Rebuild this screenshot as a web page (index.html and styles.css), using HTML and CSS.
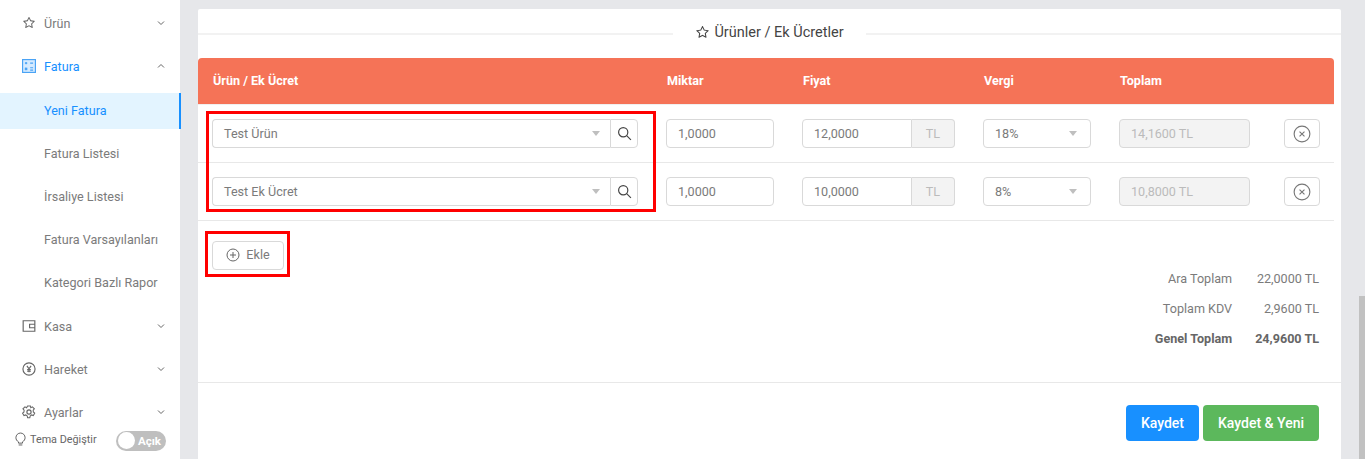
FILE: index.html
```html
<!DOCTYPE html>
<html lang="tr">
  <head>
    <meta charset="UTF-8" />
    <title>Yeni Fatura</title>
    <link rel="stylesheet" href="styles.css">
  </head>
  <body>
    <div class="app">
      <aside class="sidebar">
        <nav class="menu">
          <div class="menu-item">
            <svg class="menu-icon" viewBox="0 0 1024 1024"><path fill="currentColor" d="M908 353.1l-253.9-36.9L540.7 86.1c-3.1-6.3-8.2-11.4-14.5-14.5-15.8-7.8-35-1.3-42.9 14.5L369.8 316.2l-253.9 36.9c-7 1-13.4 4.3-18.3 9.3a32.05 32.05 0 0 0 .6 45.3l183.7 179.1-43.4 252.9a31.95 31.95 0 0 0 46.4 33.7L512 754l227.1 119.4c6.2 3.3 13.4 4.4 20.3 3.2 17.4-3 29.1-19.5 26.1-36.9l-43.4-252.9 183.7-179.1c5-4.9 8.3-11.3 9.3-18.3 2.7-17.5-9.5-33.7-27-36.3zM664.8 561.6l36.1 210.3L512 672.7 323.1 772l36.1-210.3-152.8-149L417.6 382 512 190.7 606.4 382l211.2 30.7-152.8 148.9z"/></svg>
            <span class="menu-label">Ürün</span>
            <svg class="chevron" viewBox="0 0 10 10"><path d="M2 3.5l3 3 3-3"/></svg>
          </div>
          <div class="menu-item is-open">
            <svg class="menu-icon" viewBox="0 0 12 12"><rect x="0.5" y="0.5" width="11" height="11" fill="#d6ebff" stroke="currentColor"/><path d="M2.5 3.5h2M3.5 2.5v2M7 3.500h2.500M2.500 7.500l2 2M4.500 7.500l-2 2M7 7.500h2.500M7 9.500h2.500" stroke="currentColor" fill="none"/></svg>
            <span class="menu-label">Fatura</span>
            <svg class="chevron" viewBox="0 0 10 10"><path d="M2 6.5l3-3 3 3"/></svg>
          </div>
          <div class="submenu">
            <div class="submenu-item is-active">Yeni Fatura</div>
            <div class="submenu-item">Fatura Listesi</div>
            <div class="submenu-item">İrsaliye Listesi</div>
            <div class="submenu-item">Fatura Varsayılanları</div>
            <div class="submenu-item">Kategori Bazlı Rapor</div>
          </div>
          <div class="menu-item">
            <svg class="menu-icon" viewBox="0 0 12 12"><path d="M1 1.5h10v9H1zM11 4.5H6.5v3H11" fill="none" stroke="currentColor"/></svg>
            <span class="menu-label">Kasa</span>
            <svg class="chevron" viewBox="0 0 10 10"><path d="M2 3.5l3 3 3-3"/></svg>
          </div>
          <div class="menu-item">
            <svg class="menu-icon" viewBox="0 0 12 12"><circle cx="6" cy="6" r="5.2" fill="none" stroke="currentColor"/><path d="M4.2 3.4L6 5.8l1.8-2.4M6 5.8v3M4.4 6.4h3.2M4.4 7.8h3.2" fill="none" stroke="currentColor"/></svg>
            <span class="menu-label">Hareket</span>
            <svg class="chevron" viewBox="0 0 10 10"><path d="M2 3.5l3 3 3-3"/></svg>
          </div>
          <div class="menu-item">
            <svg class="menu-icon" viewBox="0 0 12 12"><path d="M4.8.8h2.4l.3 1.6 1.4-.8L10.6 3.3l-1 1.2.1 1.5 1.2 1-1.2 2-1.5-.5-1.2.9-.3 1.6H4.8l-.3-1.6-1.3-.9-1.5.5-1.2-2 1.2-1 .1-1.5-1-1.2 1.7-1.7 1.4.8z" fill="none" stroke="currentColor" stroke-width="0.9"/><circle cx="6" cy="6" r="1.8" fill="none" stroke="currentColor"/></svg>
            <span class="menu-label">Ayarlar</span>
            <svg class="chevron" viewBox="0 0 10 10"><path d="M2 3.5l3 3 3-3"/></svg>
          </div>
        </nav>
        <div class="theme-bar">
          <svg class="bulb" viewBox="0 0 12 15"><path d="M3.8 10.6C2 9.600 1 8 1 6a5 5 0 0 1 10 0c0 2-1 3.600-2.800 4.600v1.400H3.800zM4 14h4" fill="none" stroke="currentColor"/></svg>
          <span class="theme-label">Tema Değiştir</span>
          <span class="switch"><span class="switch-knob"></span><span class="switch-text">Açık</span></span>
        </div>
      </aside>

      <main class="content">
        <section class="card">
          <div class="section-title">
            <span class="section-line"></span>
            <h2>
              <svg class="title-icon" viewBox="0 0 1024 1024"><path fill="currentColor" d="M908 353.1l-253.9-36.9L540.7 86.1c-3.1-6.3-8.2-11.4-14.5-14.5-15.8-7.8-35-1.3-42.9 14.5L369.8 316.2l-253.9 36.9c-7 1-13.4 4.3-18.3 9.3a32.05 32.05 0 0 0 .6 45.3l183.7 179.1-43.4 252.9a31.95 31.95 0 0 0 46.4 33.7L512 754l227.1 119.4c6.2 3.3 13.4 4.4 20.3 3.2 17.4-3 29.1-19.5 26.1-36.9l-43.4-252.9 183.7-179.1c5-4.9 8.3-11.3 9.3-18.3 2.7-17.5-9.5-33.7-27-36.3zM664.8 561.6l36.1 210.3L512 672.7 323.1 772l36.1-210.3-152.8-149L417.6 382 512 190.7 606.4 382l211.2 30.7-152.8 148.9z"/></svg>
              Ürünler / Ek Ücretler
            </h2>
            <span class="section-line"></span>
          </div>

          <div class="table">
            <div class="table-head grid-row">
              <div>Ürün / Ek Ücret</div>
              <div>Miktar</div>
              <div>Fiyat</div>
              <div>Vergi</div>
              <div>Toplam</div>
            </div>

            <div class="table-row grid-row">
              <div class="product-field">
                <div class="select-box"><span>Test Ürün</span><i class="caret"></i></div>
                <div class="search-btn"><svg viewBox="0 0 14 14"><circle cx="5.800" cy="5.800" r="4.300"/><path d="M9 9l4 4"/></svg></div>
              </div>
              <div class="field">1,0000</div>
              <div class="price-field"><div class="price-value">12,0000</div><div class="price-unit">TL</div></div>
              <div class="field select-field"><span>18%</span><i class="caret"></i></div>
              <div class="field is-disabled">14,1600 TL</div>
              <div class="remove-btn"><svg viewBox="0 0 16 16"><circle cx="8" cy="8" r="7"/><path d="M5.800 5.800l4.400 4.400M10.200 5.800l-4.400 4.400"/></svg></div>
            </div>

            <div class="table-row grid-row">
              <div class="product-field">
                <div class="select-box"><span>Test Ek Ücret</span><i class="caret"></i></div>
                <div class="search-btn"><svg viewBox="0 0 14 14"><circle cx="5.800" cy="5.800" r="4.300"/><path d="M9 9l4 4"/></svg></div>
              </div>
              <div class="field">1,0000</div>
              <div class="price-field"><div class="price-value">10,0000</div><div class="price-unit">TL</div></div>
              <div class="field select-field"><span>8%</span><i class="caret"></i></div>
              <div class="field is-disabled">10,8000 TL</div>
              <div class="remove-btn"><svg viewBox="0 0 16 16"><circle cx="8" cy="8" r="7"/><path d="M5.800 5.800l4.400 4.400M10.200 5.800l-4.400 4.400"/></svg></div>
            </div>
          </div>

          <div class="summary">
            <button class="add-btn" type="button">
              <svg viewBox="0 0 14 14"><circle cx="7" cy="7" r="6"/><path d="M7 4v6M4 7h6"/></svg>
              Ekle
            </button>
            <div class="totals">
              <div>Ara Toplam</div><div>22,0000 TL</div>
              <div>Toplam KDV</div><div>2,9600 TL</div>
              <div class="is-grand">Genel Toplam</div><div class="is-grand">24,9600 TL</div>
            </div>
          </div>

          <div class="actions">
            <button class="btn btn-blue" type="button">Kaydet</button>
            <button class="btn btn-green" type="button">Kaydet &amp; Yeni</button>
          </div>

          <span class="mark mark-products"></span>
          <span class="mark mark-add"></span>
        </section>
      </main>
    </div>
    <div class="scroll-thumb"></div>
  </body>
</html>
```

FILE: styles.css
```css
:root {
  --bg-color: #e6e7ea;
  --text-color: #7b7b7b;
  --accent-color: #1890ff;
  --border-color: #d9d9d9;
  --line-color: #e8e8e8;
  --head-color: #f57357;
}

* {
  box-sizing: border-box;
}

html,
body {
  height: 100%;
}

body {
  margin: 0;
  overflow: hidden;
  background-color: var(--bg-color);
  font-family: Roboto, "Liberation Sans", sans-serif;
  font-size: 12.6px;
  color: var(--text-color);
}

.app {
  display: flex;
  height: 459px;
}

/* sidebar */
.sidebar {
  display: flex;
  flex-direction: column;
  flex: 0 0 180px;
  background-color: #fff;
}

.menu {
  flex: 1;
  min-height: 0;
  margin-right: -1px;
  padding-top: 5px;
  overflow: hidden;
}

.menu-item {
  display: flex;
  align-items: center;
  height: 36px;
  margin-bottom: 7px;
  padding: 0 15px 0 22px;
}

.menu-item.is-open {
  color: var(--accent-color);
}

.menu-icon {
  flex: none;
  width: 14px;
  height: 14px;
  margin-right: 8px;
  color: #666;
}

.is-open .menu-icon {
  color: #4aa3f5;
}

.menu-label {
  flex: 1;
}

.chevron {
  width: 10px;
  height: 10px;
  fill: none;
  stroke: #666;
  stroke-width: 1;
}

.submenu {
  padding-top: 2px;
  padding-bottom: 1px;
}

.submenu-item {
  display: flex;
  align-items: center;
  height: 36px;
  margin-bottom: 7px;
  padding-left: 44px;
}

.submenu-item.is-active {
  margin-bottom: 6px;
  padding-bottom: 2px;
  background-color: #e3f4ff;
  border-right: 2px solid var(--accent-color);
  color: var(--accent-color);
}

.theme-bar {
  display: flex;
  align-items: center;
  flex: none;
  height: 31px;
  padding: 0 14px 9px 15px;
}

.bulb {
  width: 11px;
  height: 14px;
  margin-right: 4px;
  color: #555;
}

.theme-label {
  flex: 1;
  font-size: 10.8px;
  color: #666;
}

.switch {
  display: flex;
  align-items: center;
  width: 50px;
  height: 20px;
  margin-top: 3px;
  padding: 0 2px;
  border-radius: 10px;
  background-color: #bfbfbf;
}

.switch-knob {
  width: 17px;
  height: 17px;
  border-radius: 50%;
  background-color: #fff;
}

.switch-text {
  margin-left: 3px;
  font-size: 11.5px;
  font-weight: 700;
  color: #fff;
}

/* main card */
.content {
  flex: 1;
  min-width: 0;
  padding: 9px 24px 0 18px;
}

.card {
  position: relative;
  height: 100%;
  background-color: #fff;
  border-radius: 2px 2px 0 0;
}

.section-title {
  display: flex;
  align-items: center;
  height: 49px;
}

.section-title h2 {
  display: flex;
  align-items: center;
  margin: 0;
  padding: 0 22px;
  font-size: 14.5px;
  font-weight: 400;
  color: #444;
  margin-bottom: 3px;
}

.title-icon {
  width: 15px;
  height: 15px;
  margin-right: 4px;
}

.section-line {
  flex: 1;
  height: 2px;
  background-color: #f2f2f2;
}

.grid-row {
  display: grid;
  grid-template-columns: 426px 108px 153px 108px 131px 36px;
  column-gap: 28px;
  align-items: center;
  width: 1136px;
  padding-left: 14px;
}

.grid-row > :nth-child(6) {
  margin-left: 6px;
}

.table-head {
  height: 46px;
  padding-left: 15px;
  padding-bottom: 2px;
  background-color: var(--head-color);
  border-radius: 4px 4px 0 0;
  font-weight: 700;
  color: #fff;
}

.table-row {
  height: 58px;
  border-bottom: 1px solid var(--line-color);
}

.table-row:nth-child(2) {
  height: 59px;
  border-top: 1px solid #f0f0f0;
}

.field,
.select-box,
.price-value {
  display: flex;
  align-items: center;
  height: 29px;
  padding: 0 11px;
  border: 1px solid var(--border-color);
  border-radius: 4px;
  background-color: #fff;
}

.product-field {
  display: flex;
}

.select-box {
  flex: 1;
  justify-content: space-between;
  padding-right: 10px;
  border-right: 0;
  border-radius: 4px 0 0 4px;
}

.caret {
  width: 0;
  height: 0;
  border-left: 4px solid transparent;
  border-right: 4px solid transparent;
  border-top: 5px solid #bfbfbf;
}

.search-btn {
  display: flex;
  align-items: center;
  justify-content: center;
  width: 28px;
  height: 29px;
  border: 1px solid var(--border-color);
  border-radius: 0 4px 4px 0;
}

.search-btn svg {
  width: 15px;
  height: 15px;
  fill: none;
  stroke: #444;
  stroke-width: 1.1;
}

.price-field {
  display: flex;
}

.price-value {
  flex: 1;
  border-radius: 4px 0 0 4px;
}

.price-unit {
  display: flex;
  align-items: center;
  justify-content: center;
  width: 43px;
  height: 29px;
  border: 1px solid var(--border-color);
  border-left: 0;
  border-radius: 0 4px 4px 0;
  background-color: #f3f3f3;
  color: #bbb;
}

.select-field {
  justify-content: space-between;
  padding-right: 13px;
}

.field.is-disabled {
  background-color: #f3f3f3;
  color: #bbb;
}

.remove-btn {
  display: flex;
  align-items: center;
  justify-content: center;
  width: 36px;
  height: 29px;
  border: 1px solid var(--border-color);
  border-radius: 4px;
}

.remove-btn svg {
  width: 18px;
  height: 18px;
  fill: none;
  stroke: #777;
}

/* totals */
.summary {
  display: flex;
  justify-content: space-between;
  align-items: flex-start;
  height: 162px;
  padding: 20px 22px 0 14px;
  border-bottom: 1px solid var(--line-color);
}

.add-btn {
  display: flex;
  align-items: center;
  justify-content: center;
  width: 72px;
  height: 29px;
  padding: 0 0 2px;
  border: 1px solid var(--border-color);
  border-radius: 4px;
  background-color: #fff;
  font: inherit;
  color: var(--text-color);
}

.add-btn svg {
  width: 14px;
  height: 14px;
  margin-right: 6px;
  fill: none;
  stroke: #666;
}

.totals {
  display: grid;
  grid-template-columns: auto auto;
  column-gap: 23px;
  margin-top: 23px;
  text-align: right;
  line-height: 30px;
}

.is-grand {
  font-weight: 700;
  color: #666;
}

.actions {
  display: flex;
  justify-content: flex-end;
  gap: 4px;
  padding: 22px 22px 0 0;
}

.btn {
  height: 36px;
  padding: 0 15px;
  border: 0;
  border-radius: 4px;
  font: inherit;
  font-size: 14px;
  font-weight: 500;
  color: #fff;
}

.btn-blue {
  background-color: var(--accent-color);
}

.btn-green {
  background-color: #5cb85c;
}

/* red annotation frames over the form */
.mark {
  position: absolute;
  border: 3px solid #f00;
}

.mark-products {
  left: 8px;
  top: 102px;
  width: 450px;
  height: 101px;
}

.mark-add {
  left: 7px;
  top: 222px;
  width: 85px;
  height: 46px;
}

.scroll-thumb {
  position: fixed;
  right: 0;
  top: 296px;
  bottom: 0;
  width: 6px;
  background-color: #c1c1c1;
}
```
